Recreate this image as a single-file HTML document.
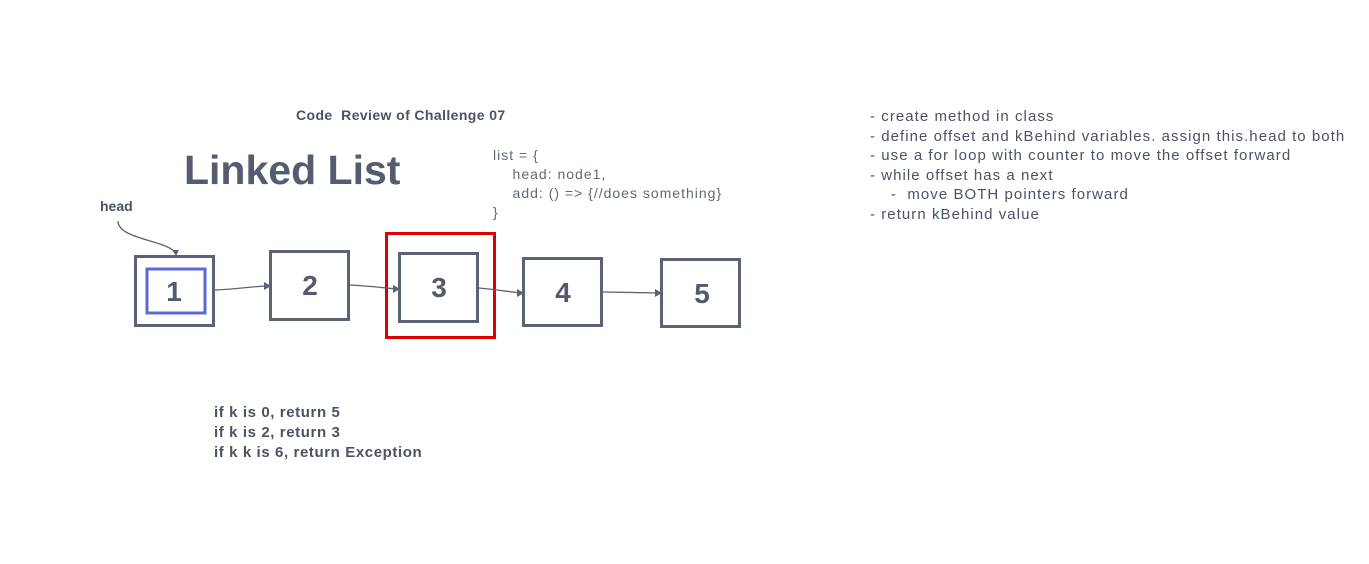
<!DOCTYPE html>
<html><head><style>
body{margin:0;width:1369px;height:564px;background:#fff;position:relative;overflow:hidden;font-family:"Liberation Sans",sans-serif;color:#525a6e}
.t{position:absolute;white-space:pre;}
</style></head><body>
<div class="t" style="left:296px;top:107px;font-size:14px;font-weight:bold;color:#4a5266;letter-spacing:0.4px">Code  Review of Challenge 07</div>
<div class="t" style="left:184px;top:147px;font-size:41px;font-weight:bold;color:#545c70">Linked List</div>
<div class="t" style="left:493px;top:146px;font-size:14px;line-height:19px;color:#616878;letter-spacing:1px">list = {
    head: node1,
    add: () =&gt; {//does something}
}</div>
<div class="t" style="left:100px;top:198px;font-size:14px;font-weight:bold;color:#4a5266">head</div>
<div class="t" style="left:214px;top:403px;font-size:15px;line-height:20px;font-weight:bold;color:#4a5266;letter-spacing:0.6px">if k is 0, return 5
if k is 2, return 3
if k k is 6, return Exception</div>
<div class="t" style="left:870px;top:107px;font-size:15px;line-height:19.6px;color:#4a5266;letter-spacing:1.05px">- create method in class
- define offset and kBehind variables. assign this.head to both
- use a for loop with counter to move the offset forward
- while offset has a next
    -  move BOTH pointers forward
- return kBehind value</div>
<svg width="1369" height="564" style="position:absolute;left:0;top:0" fill="none">
<g stroke="#5a6275" stroke-width="3">
<rect x="135.5" y="256.5" width="78" height="69"/>
<rect x="270.5" y="251.5" width="78" height="68"/>
<rect x="399.5" y="253.5" width="78" height="68"/>
<rect x="523.5" y="258.5" width="78" height="67"/>
<rect x="661.5" y="259.5" width="78" height="67"/>
</g>
<rect x="147" y="269" width="58" height="44" stroke="#5b6bd1" stroke-width="3"/>
<rect x="386.5" y="233.5" width="108" height="104" stroke="#dd0000" stroke-width="3"/>
<g stroke="#5a6275" stroke-width="1.3">
<path d="M118 221 C118 240,170 240,176 254"/>
<path d="M215 290 C240 289,255 286,268 286"/>
<path d="M350 285 C370 286,385 288,398 289"/>
<path d="M479 288 C500 290,510 292,522 293"/>
<path d="M603 292 L660 293"/>
</g>
<g fill="#5a6275">
<path d="M172 250 L179 250 L176 256Z"/>
<path d="M264 282 L271 286 L264 290Z"/>
<path d="M393 285 L400 289 L393 293Z"/>
<path d="M517 289 L524 293 L517 297Z"/>
<path d="M655 289 L662 293 L655 297Z"/>
</g>
<g fill="#525a6e" font-family="Liberation Sans, sans-serif" font-weight="bold" font-size="28" text-anchor="middle">
<text x="174" y="301">1</text>
<text x="310" y="295">2</text>
<text x="439" y="297">3</text>
<text x="563" y="302">4</text>
<text x="702" y="303">5</text>
</g>
</svg>
</body></html>
